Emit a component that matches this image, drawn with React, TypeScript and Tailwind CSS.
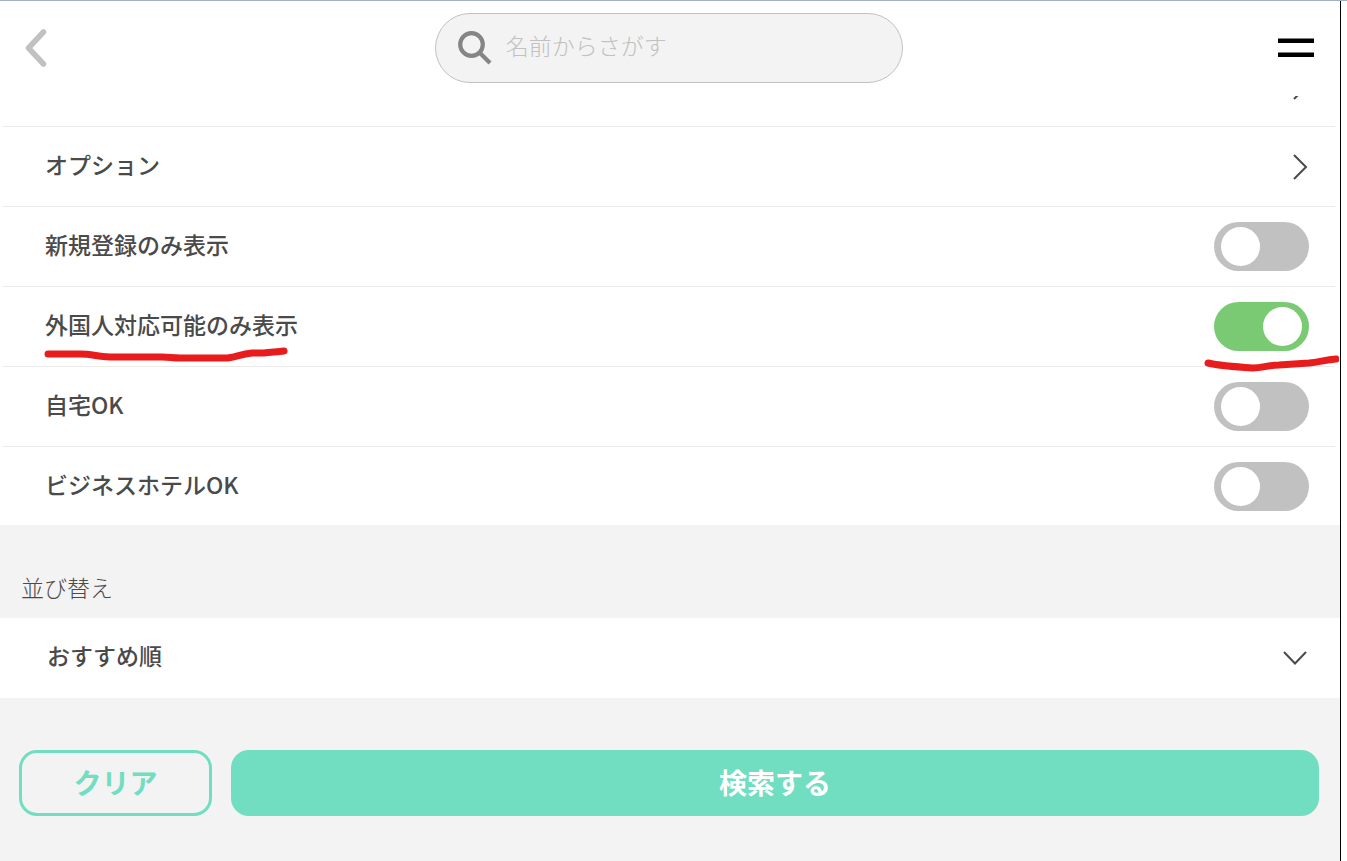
import { useState } from "react";

const BackIcon = () => (
  <svg width="22" height="38" viewBox="0 0 22 38" fill="none">
    <path
      d="M18.500 3L3.500 19L18.500 35"
      stroke="#c1c1c1"
      strokeWidth="5.500"
      strokeLinecap="round"
      strokeLinejoin="round"
    />
  </svg>
);

const SearchIcon = () => (
  <svg width="34" height="34" viewBox="0 0 34 34" fill="none" className="shrink-0">
    <circle cx="13.500" cy="13.500" r="11.300" stroke="#858585" strokeWidth="4.200" />
    <path d="M21.500 21.500L32 32" stroke="#858585" strokeWidth="4.200" />
  </svg>
);

const MenuIcon = () => (
  <svg width="36" height="20" viewBox="0 0 36 20">
    <rect width="36" height="4.500" y="0.500" />
    <rect width="36" height="4.500" y="14.500" />
  </svg>
);

const ChevronRight = () => (
  <svg width="15" height="26" viewBox="0 0 15 26" fill="none">
    <path d="M1 1L13 13L1 25" stroke="#4a4a4a" strokeWidth="2" />
  </svg>
);

const ChevronDown = () => (
  <svg width="24" height="14" viewBox="0 0 24 14" fill="none">
    <path d="M1 1L12 12.500L23 1" stroke="#4a4a4a" strokeWidth="2" />
  </svg>
);

// Hand-drawn marker lines under the highlighted row
const MarkerLines = () => (
  <>
    <svg
      className="pointer-events-none absolute top-[59px] left-[41px] z-10"
      width="244"
      height="16"
      viewBox="0 0 244 16"
      fill="none"
    >
      <path
        d="M4 8L36 8C48 8 56 11 70 11L118 11C126 11 128 12 136 12L181 12C190 12 196 8 208 7L220 7C226 6 232 6 240 5"
        stroke="#e81c1c"
        strokeWidth="7"
        strokeLinecap="round"
        strokeLinejoin="round"
      />
    </svg>
    <svg
      className="pointer-events-none absolute top-[66px] -right-1 z-10"
      width="136"
      height="20"
      viewBox="0 0 136 20"
      fill="none"
    >
      <path
        d="M5 10C18 13 34 14 50 15C60 15 64 12 76 12L106 10C116 9 122 7 133 6"
        stroke="#e81c1c"
        strokeWidth="7"
        strokeLinecap="round"
        strokeLinejoin="round"
      />
    </svg>
  </>
);

const LinkRow = ({ label, name }: { label?: string; name: string }) => (
  <a
    href="#"
    aria-label={name}
    className="flex h-20 w-full shrink-0 items-center justify-between border-t border-[#ebebeb] pr-[27px] pl-[42px]"
  >
    <span className="pb-[5px]">{label}</span>
    <ChevronRight />
  </a>
);

const ToggleRow = ({
  label,
  checked,
  onChange,
  marked,
}: {
  label: string;
  checked: boolean;
  onChange: () => void;
  marked?: boolean;
}) => (
  <label className="relative flex items-center justify-between border-t border-[#ebebeb] pt-[15px] pr-[26px] pb-[15px] pl-[42px] last:pb-[14px]">
    <span className="pb-[5px]">{label}</span>
    <input
      type="checkbox"
      checked={checked}
      onChange={onChange}
      className="flex h-[49px] w-[95px] appearance-none items-center rounded-full bg-[#c1c1c1] px-[7px] before:size-[39px] before:rounded-full before:bg-white checked:justify-end checked:bg-[#7aca74]"
    />
    {marked && <MarkerLines />}
  </label>
);

const App = () => {
  const [newOnly, setNewOnly] = useState(false);
  const [foreignOnly, setForeignOnly] = useState(true);
  const [homeOk, setHomeOk] = useState(false);
  const [hotelOk, setHotelOk] = useState(false);

  return (
    <div className="flex min-h-screen flex-col border-t border-[#a3afc6] bg-white pr-[6px] font-['Noto_Sans_CJK_JP',sans-serif] text-[23px] text-[#4a4a4a]">
      <div className="grow border-r border-black bg-[#f3f3f3]">
        <header className="grid h-[95px] grid-cols-[1fr_35%_1fr] items-center bg-white pr-[2px] pb-[2px]">
          <button aria-label="戻る" className="justify-self-start pl-[25px]">
            <BackIcon />
          </button>
          <label className="flex h-[70px] items-center gap-[14px] rounded-full border border-[#c1c1c1] bg-[#f3f3f3] px-[22px]">
            <SearchIcon />
            <input
              type="text"
              aria-label="名前からさがす"
              placeholder="名前からさがす"
              className="min-w-0 grow bg-transparent pb-1 font-light outline-none placeholder:text-[#c1c1c1]"
            />
          </label>
          <button aria-label="メニュー" className="justify-self-end pr-[24px]">
            <MenuIcon />
          </button>
        </header>

        <section className="bg-white pr-[5px] pl-[3px] font-medium">
          {/* Row scrolled halfway under the header */}
          <div className="flex h-[30px] items-end overflow-hidden">
            <LinkRow name="前の項目" />
          </div>
          <LinkRow label="オプション" name="オプション" />
          <ToggleRow
            label="新規登録のみ表示"
            checked={newOnly}
            onChange={() => setNewOnly(!newOnly)}
          />
          <ToggleRow
            label="外国人対応可能のみ表示"
            checked={foreignOnly}
            onChange={() => setForeignOnly(!foreignOnly)}
            marked
          />
          <ToggleRow
            label="自宅OK"
            checked={homeOk}
            onChange={() => setHomeOk(!homeOk)}
          />
          <ToggleRow
            label="ビジネスホテルOK"
            checked={hotelOk}
            onChange={() => setHotelOk(!hotelOk)}
          />
        </section>

        <section>
          <label
            htmlFor="sort"
            className="flex h-[93px] items-end px-[21px] pb-[14px] font-light"
          >
            並び替え
          </label>
          <div className="relative h-20 bg-white font-medium">
            <select
              id="sort"
              className="h-full w-full appearance-none pb-[5px] pl-[47px] outline-none"
            >
              <option>おすすめ順</option>
            </select>
            <span className="pointer-events-none absolute inset-y-0 right-[33px] flex items-center">
              <ChevronDown />
            </span>
          </div>
        </section>

        <div className="flex gap-[19px] pt-[52px] pr-[21px] pb-11 pl-[19px] text-[28px] font-bold">
          <button className="h-[66px] w-[193px] rounded-[18px] border-3 border-[#71ddc1] pb-[2px] text-[#71ddc1]">
            クリア
          </button>
          <button className="h-[66px] grow rounded-[18px] bg-[#71ddc1] pb-[2px] text-white">
            検索する
          </button>
        </div>
      </div>
    </div>
  );
};

export default App;
